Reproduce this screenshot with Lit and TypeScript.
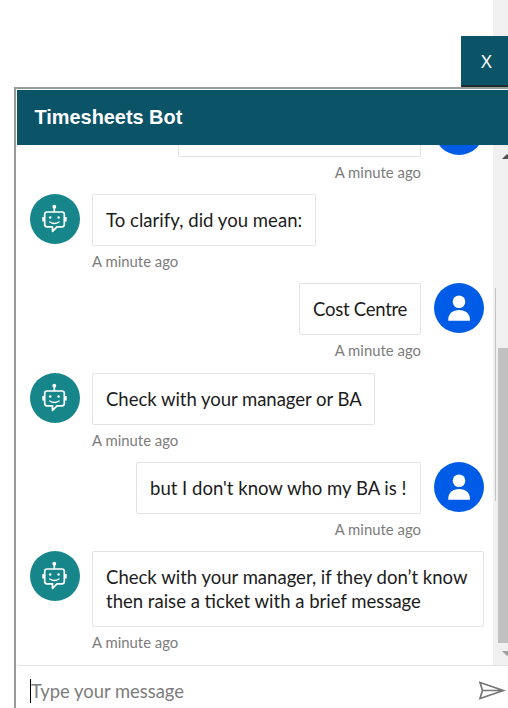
import { LitElement, html, css, svg } from "lit";
import { customElement, property } from "lit/decorators.js";

interface Message {
  from: "bot" | "user";
  lines: string[];
  width: number;
  spacing?: number;
}

const MESSAGES: Message[] = [
  { from: "bot", lines: ["To clarify, did you mean:"], width: 224, spacing: 0.03 },
  { from: "user", lines: ["Cost Centre"], width: 122, spacing: -0.27 },
  { from: "bot", lines: ["Check with your manager or BA"], width: 283, spacing: -0.04 },
  { from: "user", lines: ["but I don't know who my BA is !"], width: 285 },
  {
    from: "bot",
    lines: ["Check with your manager, if they don’t know", "then raise a ticket with a brief message"],
    width: 392,
  },
];

const botIcon = svg`
  <g fill="none" stroke="#fff" stroke-width="1.7" stroke-linejoin="round">
    <path d="M24.300 13v5M17 18h15a2.300 2.300 0 0 1 2.300 2.300v10.200a2.300 2.300 0 0 1-2.300 2.300h-5l-4.500 4.500v-4.500H17a2.300 2.300 0 0 1-2.300-2.300V20.300A2.300 2.300 0 0 1 17 18z"/>
    <path d="M19.800 28q4.600 3 9.200 0" stroke-width="1.400" stroke-linecap="round"/>
  </g>
  <g fill="#fff">
    <circle cx="24.300" cy="12.700" r="1.900"/>
    <circle cx="20.200" cy="23.500" r="1.200"/><circle cx="28.600" cy="23.500" r="1.200"/>
    <rect x="12.300" y="23" width="2.400" height="4.500"/><rect x="34.300" y="23" width="2.400" height="4.500"/>
  </g>`;

const userIcon = svg`
  <g fill="#fff">
    <circle cx="25" cy="18.800" r="6.300"/>
    <path d="M14.300 37.800v-1.500c0-5.500 4.500-9.300 10.800-9.300s10.800 3.800 10.800 9.300v1.500z"/>
  </g>`;

@customElement("chat-avatar")
export class ChatAvatar extends LitElement {
  @property() kind: "bot" | "user" = "bot";
  static styles = css`
    :host { display: block; flex: none; width: 50px; height: 50px; }
    svg { display: block; border-radius: 50%; }
    .bot { background: #17868b; }
    .user { background: #005ce6; }
  `;
  render() {
    return html`<svg class=${this.kind} width="50" height="50" viewBox="0 0 50 50">
      ${this.kind === "bot" ? botIcon : userIcon}
    </svg>`;
  }
}

@customElement("chat-message")
export class ChatMessage extends LitElement {
  @property({ attribute: false }) message!: Message;
  static styles = css`
    :host { display: block; }
    .row { display: flex; align-items: flex-start; gap: 12px; }
    .row.user { flex-direction: row-reverse; gap: 13px; }
    .content { display: flex; flex-direction: column; align-items: flex-start; }
    .user .content { align-items: flex-end; }
    .bubble {
      box-sizing: border-box; min-height: 52px; border: 1px solid #e3e3e3; border-radius: 2px;
      padding: 13px; font-size: 18.550px; line-height: 24px; color: #1c1c1c; white-space: nowrap;
    }
    .time { margin-top: 5px; font-size: 14.900px; line-height: 20px; color: #7c7c7c; white-space: nowrap; }
  `;
  render() {
    const m = this.message;
    return html`<div class="row ${m.from}">
      <chat-avatar kind=${m.from}></chat-avatar>
      <div class="content">
        <div class="bubble" style="width:${m.width}px;letter-spacing:${m.spacing ?? 0}px">
          ${m.lines.map((l) => html`<div>${l}</div>`)}
        </div>
        <div class="time">A minute ago</div>
      </div>
    </div>`;
  }
}

@customElement("app-root")
export class AppRoot extends LitElement {
  static styles = css`
    :host {
      display: flex; flex-direction: column; width: 508px; height: 708px; overflow: hidden;
      background: #fff; font-family: Lato, "Noto Sans", sans-serif;
    }
    .top { display: flex; height: 87px; justify-content: flex-end; position: relative; }
    .track { position: absolute; top: 0; right: 0; width: 15px; height: 36px; background: #f0f0f0; }
    .close {
      box-sizing: border-box; align-self: flex-end; width: 47px; height: 51px; padding: 0 0 0 4px;
      border: 0; border-bottom: 2px solid #1d2a30; background: #0b5468; color: #fff;
      font: 18.500px "Noto Sans", sans-serif;
    }
    .frame {
      box-sizing: border-box; flex: 1; min-height: 0; margin-left: 14px; padding: 1px 0 0 1px;
      border: solid #999; border-width: 2px 0 0 2px; display: flex; flex-direction: column;
    }
    .header {
      flex: none; height: 55px; padding-left: 17.500px; background: #0b5468; color: #fff;
      font: bold 19.900px/54px "Liberation Sans", sans-serif;
    }
    .body { flex: none; height: 520px; display: flex; overflow: hidden; }
    .list { width: 454px; margin: 0 9px 0 13px; }
    .cut {
      box-sizing: border-box; height: 49px; padding-bottom: 12px; overflow: hidden;
      display: flex; flex-direction: column; justify-content: flex-end;
    }
    .list > chat-message { height: 89.300px; }
    .bar { position: relative; width: 15px; background: #f0f0f0; }
    .bar svg { display: block; }
    .input { flex: 1; border-top: 1px solid #e3e3e3; display: flex; align-items: center; padding: 8px 2px 0 13px; }
    .caret { width: 1px; height: 24px; background: #000; }
    .hint { flex: 1; color: #7c7c7c; font-size: 18.400px; line-height: 24px; }
  `;
  render() {
    return html`
      <div class="top"><div class="track"></div><button class="close">X</button></div>
      <div class="frame">
        <div class="header">Timesheets Bot</div>
        <div class="body">
          <div class="list">
            <div class="cut"><chat-message .message=${{ from: "user", lines: [], width: 243 }}></chat-message></div>
            ${MESSAGES.map((m) => html`<chat-message .message=${m}></chat-message>`)}
          </div>
          <div class="bar">
            <svg width="15" height="520">
              <path d="M2.500 143v213" stroke="#c4c4c4"/>
              <path d="M5 203h10v295H5z" fill="#c1c1c1"/>
              <path d="M9 14l5-5 5 5z" fill="#505050"/><path d="M9 506h10l-5 5z" fill="#a0a0a0"/>
            </svg>
          </div>
        </div>
        <div class="input">
          <div class="caret"></div><div class="hint">Type your message</div>
          <svg width="27" height="20" fill="none" stroke="#767676" stroke-width="1.700">
            <path d="M1 1.500l23.500 8-23.500 8 2.500-8zM3.500 9.500h20"/>
          </svg>
        </div>
      </div>`;
  }
}
